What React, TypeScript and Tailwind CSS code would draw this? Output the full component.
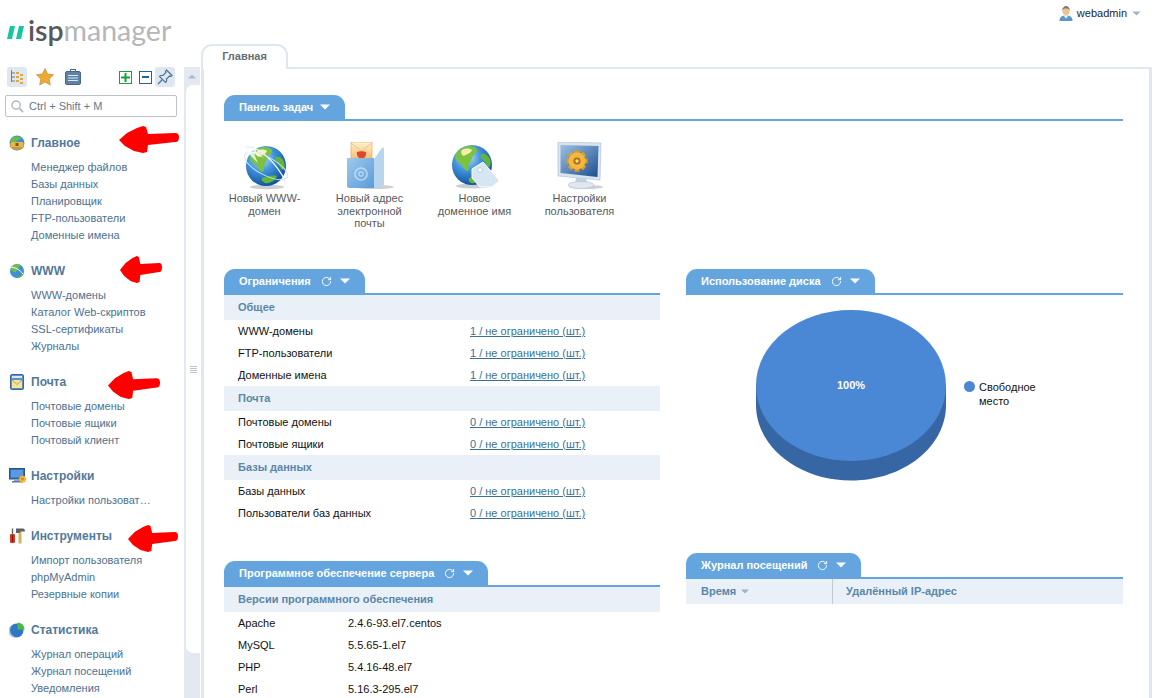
import React from 'react';
import { RotateCw } from 'lucide-react';

const font = { fontFamily: '"Liberation Sans", Arial, sans-serif' };

const Globe: React.FC<{ className?: string }> = ({ className }) => (
  <svg viewBox="0 0 48 48" className={className}>
    <defs>
      <radialGradient id="globeFill" cx="38%" cy="30%" r="75%">
        <stop offset="0" stopColor="#bfe3fb" />
        <stop offset="0.45" stopColor="#3f93dc" />
        <stop offset="1" stopColor="#0f4b97" />
      </radialGradient>
    </defs>
    <ellipse cx="25" cy="44" rx="17" ry="2.5" fill="#c9ced3" />
    <circle cx="24" cy="23" r="20" fill="url(#globeFill)" />
    <path d="M11 8c5-4 13-5 17-2 3 3-1 5-3 8s-1 6-4 8c-2 2 1 5-1 7-3 0-5-4-7-7-2-2-5-3-6-6 0-3 2-6 4-8z" fill="#7cc242" />
    <path d="M14 8c3-2 8-2 10 0-1 3-5 4-8 6-2 0-4-4-2-6z" fill="#f1efa8" />
    <path d="M33 12c3-1 7 1 9 5 1 4 1 7-1 8-3-1-3-4-5-6-2-2-5-5-3-7z" fill="#63b53a" />
    <path d="M21 36c4-2 10-2 13-1-2 4-7 7-11 6-2-1-3-3-2-5z" fill="#63b53a" />
  </svg>
);

const GlobeRing: React.FC = () => (
  <svg viewBox="0 0 48 48" className="w-12 h-12">
    <defs>
      <radialGradient id="ringFill" cx="38%" cy="30%" r="75%">
        <stop offset="0" stopColor="#bfe3fb" />
        <stop offset="0.45" stopColor="#3f93dc" />
        <stop offset="1" stopColor="#0f4b97" />
      </radialGradient>
    </defs>
    <ellipse cx="26" cy="45" rx="17" ry="2.2" fill="#c9ced3" />
    <circle cx="25" cy="24" r="20" fill="url(#ringFill)" />
    <path d="M13 9c5-4 13-5 17-2 3 3-1 5-3 8s-1 6-4 8c-2 2 1 5-1 7-3 0-5-4-7-7-2-2-5-3-6-6 0-3 2-6 4-8z" fill="#7cc242" />
    <path d="M16 9c3-2 8-2 10 0-1 3-5 4-8 6-2 0-4-4-2-6z" fill="#f6f3b0" />
    <path d="M35 15c3-1 7 1 8 5 1 4 1 7-1 8-3-1-3-4-5-6-2-2-4-5-2-7z" fill="#63b53a" />
    <path d="M21 36c4-2 12-3 15-2-2 5-8 8-12 7-2-1-4-3-3-5z" fill="#63b53a" />
    <path d="M4 6c10-5 28 12 37 27 3 5 4 8 2 9" fill="none" stroke="#e8f4ff" strokeWidth="1.4" />
    <ellipse cx="25" cy="24" rx="24" ry="9" transform="rotate(28 25 24)" fill="none" stroke="#cfe5f7" strokeWidth="0.9" />
    <path d="M9 13 17 21 13 12 23 16 15 10 15 3 12 10 4 8z" fill="#fff" opacity="0.8" />
  </svg>
);

const Mailbox: React.FC = () => (
  <svg viewBox="0 0 48 48" className="w-12 h-12">
    <defs>
      <linearGradient id="boxFront" x1="0" y1="0" x2="1" y2="1">
        <stop offset="0" stopColor="#9ec9ee" />
        <stop offset="1" stopColor="#5a9bd8" />
      </linearGradient>
      <linearGradient id="envFill" x1="0" y1="0" x2="0" y2="1">
        <stop offset="0" stopColor="#fff3cf" />
        <stop offset="1" stopColor="#f4b766" />
      </linearGradient>
    </defs>
    <ellipse cx="28" cy="45" rx="20" ry="2" fill="#ccd0d5" />
    <path d="M28 17 36 6c1-1 2 0 2 1v36l-10 3z" fill="#b9d5ee" />
    <rect x="5" y="0" width="21" height="19" fill="url(#envFill)" stroke="#e9a95c" strokeWidth="0.7" />
    <path d="M5 1 15.500 9 26 1" fill="none" stroke="#f2c287" strokeWidth="1" />
    <path d="M11 10c2-1 7-1 9 0 1 3-2 7-4.500 7S10 13 11 10z" fill="#d9482f" />
    <path d="M1 16h27v30H3c-1 0-2-1-2-2z" fill="url(#boxFront)" />
    <circle cx="15" cy="32" r="6" fill="none" stroke="#cfe2f3" strokeWidth="1.6" opacity="0.8" />
    <circle cx="15" cy="32" r="2.200" fill="none" stroke="#cfe2f3" strokeWidth="1.200" opacity="0.8" />
  </svg>
);

const GlobeTag: React.FC = () => (
  <div className="relative w-12 h-12">
    <Globe className="w-12 h-12 -translate-x-[3px]" />
    <svg viewBox="0 0 48 48" className="absolute inset-0 w-12 h-12">
      <path d="M21 27 32 20 47 37C48 38 48 39 47 40L41 45H29L21 36z" fill="#d6e6f3" stroke="#fff" strokeWidth="1" />
      <circle cx="29" cy="28" r="2.300" fill="#fff" stroke="#9fbdd6" strokeWidth="0.7" />
    </svg>
  </div>
);

const Gear: React.FC<{ cx: number; cy: number; r: number }> = ({ cx, cy, r }) => (
  <g>
    {[0, 45, 90, 135].map((a) => (
      <rect key={a} x={cx - r * 0.28} y={cy - r * 1.25} width={r * 0.56} height={r * 2.5} fill="#e59a22" transform={`rotate(${a} ${cx} ${cy})`} />
    ))}
    <circle cx={cx} cy={cy} r={r} fill="#f2b93f" />
    <circle cx={cx} cy={cy} r={r * 0.42} fill="#b2691a" />
    <circle cx={cx} cy={cy} r={r * 0.2} fill="#f7dc8c" />
  </g>
);

const Monitor: React.FC = () => (
  <svg viewBox="0 0 48 48" className="w-12 h-12">
    <defs>
      <linearGradient id="screenFill" x1="0" y1="0" x2="1" y2="1">
        <stop offset="0" stopColor="#9cc0e2" />
        <stop offset="1" stopColor="#1c4f8f" />
      </linearGradient>
    </defs>
    <ellipse cx="30" cy="45" rx="17" ry="2" fill="#ccd0d5" />
    <path d="M2 0 45 1 44 38 2 34z" fill="#d8e4ef" stroke="#a9bdd0" strokeWidth="0.6" />
    <path d="M4.500 3 42.500 4 41.500 35 4.500 31z" fill="url(#screenFill)" />
    <Gear cx={21} cy={19} r={8.500} />
    <path d="M20 36h10l1 5H19z" fill="#c2d1df" />
    <ellipse cx="25" cy="43" rx="13" ry="3.500" fill="#dfe8f0" stroke="#aebfce" strokeWidth="0.6" />
  </svg>
);

const NavGlobe: React.FC = () => (
  <svg viewBox="0 0 16 16" className="w-4 h-4">
    <circle cx="8" cy="8" r="7.500" fill="#3f8fd8" />
    <path d="M3 3c3-2 7-2 9 0-1 2-4 2-5 4-2 1-5 0-6-1 0-1 1-2 2-3z" fill="#6dbb45" />
    <path d="M1 8h14v4c-1 2-4 3-7 3s-5-1-7-3z" fill="#c89a3e" />
    <rect x="2" y="7" width="12" height="5" fill="#e3b650" />
    <rect x="6.500" y="8" width="3" height="3" fill="#7a5a20" />
  </svg>
);

const NavWww: React.FC = () => (
  <svg viewBox="0 0 16 16" className="w-4 h-4">
    <circle cx="8" cy="8" r="7" fill="#3f8fd8" />
    <path d="M3 3c3-2 6-2 8-1-1 3-3 4-4 7-2 1-4-1-5-3 0-1 0-2 1-3z" fill="#72c043" />
    <path d="M8 14c2-1 5-2 6-5l1 1c-1 3-4 5-7 5z" fill="#62b43a" />
    <path d="M1 4c5 0 10 3 13 7" fill="none" stroke="#fff" strokeWidth="1" />
  </svg>
);

const NavMail: React.FC = () => (
  <svg viewBox="0 0 16 16" className="w-4 h-4">
    <rect x="1.500" y="0.500" width="13" height="15" rx="1.500" fill="#5c8fc9" stroke="#3a6699" />
    <rect x="3" y="2" width="10" height="2" fill="#dbe7f3" />
    <rect x="3" y="6" width="10" height="8" fill="#f3e49a" />
    <path d="M3 6 8 10.500 13 6" fill="none" stroke="#a69440" strokeWidth="0.8" />
  </svg>
);

const NavSettings: React.FC = () => (
  <svg viewBox="0 0 18 16" className="w-[18px] h-4">
    <rect x="0.500" y="0.500" width="15" height="10.500" fill="#2f6fc0" stroke="#2b5580" />
    <rect x="2" y="2" width="12" height="7.500" fill="#5b9ae0" />
    <rect x="5" y="11" width="6" height="2" fill="#8ea7bf" />
    <rect x="3" y="13" width="10" height="1.500" fill="#5c7a96" />
    <Gear cx={13.500} cy={11} r={3} />
  </svg>
);

const NavTools: React.FC = () => (
  <svg viewBox="0 0 16 16" className="w-4 h-4">
    <rect x="1" y="6" width="5" height="9" rx="1" fill="#d93a22" />
    <rect x="2.800" y="0.500" width="1.400" height="6" fill="#666" />
    <rect x="2.800" y="7" width="1.400" height="7" fill="#8c1d10" />
    <rect x="9.500" y="3" width="3" height="12.500" fill="#d2b25a" />
    <path d="M7 0.500h7c1 0 2 1 2 3h-4.500L10 5H7z" fill="#5d5f62" />
  </svg>
);

const NavStats: React.FC = () => (
  <svg viewBox="0 0 16 16" className="w-4 h-4">
    <circle cx="7.500" cy="8.500" r="7" fill="#2f77c4" />
    <path d="M4 2.500a7 7 0 0 0-1 10.500 7 7 0 0 0 5 2.500 5 5 0 0 1-4-13z" fill="#a9cdf0" />
    <path d="M8.500 0.500a7 7 0 0 1 7 7h-7z" fill="#4fb83f" />
  </svg>
);

// red marker drawn over the menu
const RedArrow: React.FC<{ className: string }> = ({ className }) => (
  <svg viewBox="0 0 60 27" preserveAspectRatio="none" className={`absolute ${className}`}>
    <path d="M0 14 8 7 18 2 24 0 27 1 29 8 56 7C59 7 60 9 60 11 60 14 59 16 56 16L29 19 28 26 24 27 15 25 6 20z" fill="#ff0000" />
  </svg>
);

const Caret: React.FC<{ className?: string }> = ({ className }) => (
  <svg viewBox="0 0 10 6" className={className}>
    <path d="M0 0.500h10L5 5.500z" fill="currentColor" />
  </svg>
);

const navSections = [
  { title: 'Главное', Icon: NavGlobe, arrow: 'left-[119px] top-[-6px] w-[60px] h-[27px]', items: ['Менеджер файлов', 'Базы данных', 'Планировщик', 'FTP-пользователи', 'Доменные имена'] },
  { title: 'WWW', Icon: NavWww, arrow: 'left-[120px] top-[-4px] w-[42px] h-[27px]', items: ['WWW-домены', 'Каталог Web-скриптов', 'SSL-сертификаты', 'Журналы'] },
  { title: 'Почта', Icon: NavMail, arrow: 'left-[108px] top-[0px] w-[52px] h-[28px]', items: ['Почтовые домены', 'Почтовые ящики', 'Почтовый клиент'] },
  { title: 'Настройки', Icon: NavSettings, arrow: '', items: ['Настройки пользоват…'] },
  { title: 'Инструменты', Icon: NavTools, arrow: 'left-[128px] top-[0px] w-[50px] h-[27px]', items: ['Импорт пользователя', 'phpMyAdmin', 'Резервные копии'] },
  { title: 'Статистика', Icon: NavStats, arrow: '', items: ['Журнал операций', 'Журнал посещений', 'Уведомления'] },
];

const tasks = [
  { Icon: GlobeRing, label: 'Новый WWW-домен' },
  { Icon: Mailbox, label: 'Новый адрес электронной почты' },
  { Icon: GlobeTag, label: 'Новое доменное имя' },
  { Icon: Monitor, label: 'Настройки пользователя' },
];

const limits = [
  { group: 'Общее', rows: [['WWW-домены', '1'], ['FTP-пользователи', '1'], ['Доменные имена', '1']] },
  { group: 'Почта', rows: [['Почтовые домены', '0'], ['Почтовые ящики', '0']] },
  { group: 'Базы данных', rows: [['Базы данных', '0'], ['Пользователи баз данных', '0']] },
];

const software = [
  ['Apache', '2.4.6-93.el7.centos'],
  ['MySQL', '5.5.65-1.el7'],
  ['PHP', '5.4.16-48.el7'],
  ['Perl', '5.16.3-295.el7'],
];

const Panel: React.FC<{ title: string; refresh?: boolean; children?: React.ReactNode; className?: string }> = ({ title, refresh = true, children, className }) => (
  <section className={className}>
    <div className="border-b-2 border-[#65a5df]">
      <div className="inline-flex h-6 items-center rounded-t-[11px] bg-[#65a5df] pl-[15px] pr-[15px] align-bottom text-[11px] font-bold text-white">
        <span>{title}</span>
        {refresh && <RotateCw size={11} strokeWidth={2} className="ml-[10px] text-white" />}
        <Caret className={`h-[6px] w-[10px] text-white ${refresh ? 'ml-[8px]' : 'ml-[7px]'}`} />
      </div>
    </div>
    {children}
  </section>
);

const GroupRow: React.FC<{ title: string }> = ({ title }) => (
  <div className="flex h-[25px] items-center bg-[#e9f0f7] pl-[14px] text-[11px] font-bold text-[#5b86a8]">{title}</div>
);

const Sidebar: React.FC = () => (
  <aside className="w-[184px] shrink-0">
    <div className="pl-[7px] pt-[15px]">
      <div className="flex h-[30px] items-center">
        <svg viewBox="0 0 17 13" className="mt-[5px] h-[13px] w-[17px]">
          <path d="M3 0h5L5 13H0zM12 0h5l-3 13H9z" fill="#14c6a3" />
        </svg>
        <span className="ml-[4px] text-[28.5px] leading-none" style={{ fontFamily: 'Lato, sans-serif' }}>
          <span className="font-semibold text-[#57585b]">isp</span>
          <span className="text-[#b5b6b8]">manager</span>
        </span>
      </div>
    </div>
    <div className="mt-[22px] flex h-5 items-center pl-[7px]">
      <div className="flex h-5 w-5 items-center justify-center rounded-[3px] bg-[#dfe7f0]">
        <svg viewBox="0 0 14 14" className="h-[14px] w-[14px]">
          <path d="M1.500 0v12M1.500 3H5M1.500 7H5M1.500 11H5" fill="none" stroke="#8a7a55" strokeWidth="1" />
          <path d="M6 2h3v2H6zM6 6h3v2H6zM6 10h3v2H6zM10 4h3v2h-3zM10 8h3v2h-3zM10 12h3v2h-3z" fill="#e0a93a" />
        </svg>
      </div>
      <svg viewBox="0 0 18 18" className="ml-[9px] h-[18px] w-[18px]">
        <path d="M9 0.500 11.600 6 17.500 6.800 13.200 11 14.300 17 9 14.100 3.700 17 4.800 11 0.500 6.800 6.400 6z" fill="#eeaa35" stroke="#b97f26" strokeWidth="0.6" />
      </svg>
      <svg viewBox="0 0 16 16" className="ml-[11px] h-4 w-4">
        <rect x="5.500" y="0.500" width="5" height="3" fill="none" stroke="#4b6d8f" />
        <rect x="0.500" y="2.500" width="15" height="13" rx="1.500" fill="#5f83a8" stroke="#47688a" />
        <path d="M3 6.500h10M3 9h10M3 11.500h10" stroke="#dfe8f1" strokeWidth="1" />
      </svg>
      <div className="ml-[38px] flex h-[13px] w-[13px] items-center justify-center border-[1.5px] border-[#14a03c]">
        <svg viewBox="0 0 9 9" className="h-[9px] w-[9px]"><path d="M3.500 0h2v3.500H9v2H5.500V9h-2V5.500H0v-2h3.500z" fill="#14a03c" /></svg>
      </div>
      <div className="ml-[7px] flex h-[13px] w-[13px] items-center justify-center border-[1.5px] border-[#24609c]">
        <div className="h-[2px] w-[7px] bg-[#24609c]" />
      </div>
      <div className="ml-[3px] flex h-5 w-5 items-center justify-center rounded-[3px] bg-[#dfe7f0]">
        <svg viewBox="0 0 16 16" className="h-4 w-4">
          <path d="M9.500 1 15 6.500 13.500 7.500 12.500 7 9.500 10 9.500 12.500 8.500 13.500 2.500 7.500 3.500 6.500 6 6.500 9 3.500 8.500 2.500z" fill="none" stroke="#4f7396" strokeWidth="1.200" />
          <path d="M5.500 10.500 1 15" stroke="#4f7396" strokeWidth="1.200" />
        </svg>
      </div>
    </div>
    <div className="ml-[5px] mt-[8px] flex h-[22px] w-[172px] items-center rounded-[2px] border border-[#bcc2c7] pl-[5px] text-[11px] text-[#66788a]">
      <svg viewBox="0 0 14 14" className="h-[13px] w-[13px]">
        <circle cx="5.500" cy="5.500" r="4.500" fill="none" stroke="#b5babd" strokeWidth="1.500" />
        <path d="M9 9 13 13" stroke="#b5babd" strokeWidth="2" />
      </svg>
      <span className="ml-[5px]">Ctrl + Shift + M</span>
    </div>
    <nav className="mt-[15px]">
      {navSections.map(({ title, Icon, arrow, items }) => (
        <div key={title} className="mb-[16px]">
          <div className="relative flex h-[21px] items-center pl-[9px] text-[12px] font-bold text-[#52799b]">
            <span className="flex w-[22px] items-center"><Icon /></span>
            <span>{title}</span>
            {arrow && <RedArrow className={arrow} />}
          </div>
          <ul className="mt-[6px]">
            {items.map((item) => (
              <li key={item} className="flex h-[17px] items-center pl-[31px] text-[11px] text-[#4c7192]">{item}</li>
            ))}
          </ul>
        </div>
      ))}
    </nav>
  </aside>
);

const ScrollStrip: React.FC = () => (
  <div className="mt-[67px] flex h-[631px] w-[16px] shrink-0 flex-col bg-[#e3e9f0] pl-[2px]">
    <div className="flex h-[18px] items-center justify-center pr-[2px]">
      <Caret className="h-[5px] w-[8px] rotate-180 text-[#a9bccf]" />
    </div>
    <div className="flex h-[568px] items-center justify-center rounded-l-[7px] bg-white">
      <div className="flex w-[7px] flex-col gap-[1px]">
        <div className="h-px bg-[#bcc6cf]" />
        <div className="h-px bg-[#bcc6cf]" />
        <div className="h-px bg-[#bcc6cf]" />
        <div className="h-px bg-[#bcc6cf]" />
      </div>
    </div>
  </div>
);

const App: React.FC = () => (
  <div className="flex h-[698px] w-[1155px] overflow-hidden bg-white" style={font}>
    <Sidebar />
    <ScrollStrip />
    <main className="flex min-w-0 flex-1 flex-col pl-[1px] pr-[3px]">
      {/* Top bar */}
      <div className="flex h-[44px] shrink-0 justify-end pr-[11px] pt-[6px]">
        <div className="flex h-[15px] items-center text-[11px] text-[#1c2430]">
          <svg viewBox="0 0 14 15" className="h-[15px] w-[14px]">
            <path d="M0.500 15c0-4 2-5.500 6.500-5.500s6.500 1.500 6.500 5.500z" fill="#5d97cf" />
            <path d="M4.500 9.500 7 12.500 9.500 9.500z" fill="#fff" />
            <circle cx="7" cy="5.500" r="3.500" fill="#f2c28e" />
            <path d="M3 5c0-3 2-5 4-5s4 2 4 5c-1-2-2-2.500-4-2.500S4 3 3 5z" fill="#777" />
          </svg>
          <span className="ml-[4px]">webadmin</span>
          <Caret className="ml-[5px] h-[5px] w-[9px] text-[#a3b4c6]" />
        </div>
      </div>

      {/* Tab row */}
      <div className="relative z-10 flex h-[25px] shrink-0 border-b-2 border-[#e1e7ee]">
        <div className="-mb-[2px] flex h-[25px] w-[87px] items-center justify-center rounded-t-[11px] border-x-2 border-t-2 border-[#e1e7ee] bg-white pb-[2px] text-[11px] font-bold text-[#666e75]">Главная</div>
      </div>

      {/* Content */}
      <div className="flex min-h-0 flex-1 flex-col overflow-hidden border-x-[3px] border-[#e1e7ee] pl-[20px] pr-[26px] pt-[26px]">
        <Panel title="Панель задач" refresh={false} className="h-[174px] shrink-0">
          <div className="-ml-[12px] mt-[21px] flex">
            {tasks.map(({ Icon, label }) => (
              <div key={label} className="flex w-[105px] flex-col items-center px-[14px] text-center text-[11px] leading-[12.5px] text-[#555a5f]">
                <Icon />
                <span className="mt-[2px]">{label}</span>
              </div>
            ))}
          </div>
        </Panel>

        <div className="grid grid-cols-[436px_437px] gap-x-[26px]">
          <div>
            <Panel title="Ограничения">
              {limits.map(({ group, rows }) => (
                <div key={group}>
                  <GroupRow title={group} />
                  {rows.map(([name, used]) => (
                    <div key={name} className="flex h-[22px] items-center pl-[14px] text-[11px] text-[#111]">
                      <span className="w-[232px]">{name}</span>
                      <span className="text-[#3d6f96] underline">{used} / не ограничено (шт.)</span>
                    </div>
                  ))}
                </div>
              ))}
            </Panel>
            <Panel title="Программное обеспечение сервера" className="mt-[37px]">
              <GroupRow title="Версии программного обеспечения" />
              {software.map(([name, version]) => (
                <div key={name} className="flex h-[22px] items-center pl-[14px] text-[11px] text-[#111]">
                  <span className="w-[110px]">{name}</span>
                  <span>{version}</span>
                </div>
              ))}
            </Panel>
          </div>

          <div>
            <Panel title="Использование диска">
              <div className="flex h-[258px] pl-[70px] pt-[15px]">
                <div className="relative h-[170px] w-[190px] shrink-0">
                  <svg viewBox="0 0 190 171" className="h-[171px] w-[190px]">
                    <path d="M0 75.500V95C0 136.700 42.500 170.500 95 170.500S190 136.700 190 95V75.500z" fill="#3666a3" />
                    <ellipse cx="95" cy="75.500" rx="95" ry="75.500" fill="#4a88d6" />
                  </svg>
                  <span className="absolute left-0 right-0 top-[67px] text-center text-[11px] font-bold text-white">100%</span>
                </div>
                <div className="ml-[18px] mt-[70px] flex items-start">
                  <span className="mt-[1px] h-[11px] w-[11px] shrink-0 rounded-full bg-[#4a88d6]" />
                  <span className="ml-[4px] w-[70px] text-[11px] leading-[14px] text-[#111]">Свободное место</span>
                </div>
              </div>
            </Panel>
            <Panel title="Журнал посещений">
              <div className="flex h-[25px] items-center bg-[#e9f0f7] text-[11px] font-bold text-[#5b86a8]">
                <div className="flex h-full w-[147px] items-center border-r border-[#c4c9cd] pl-[15px]">
                  Время
                  <Caret className="ml-[5px] h-[5px] w-[8px] text-[#9fb3c6]" />
                </div>
                <div className="pl-[13px]">Удалённый IP-адрес</div>
              </div>
            </Panel>
          </div>
        </div>
      </div>
    </main>
  </div>
);

export default App;
